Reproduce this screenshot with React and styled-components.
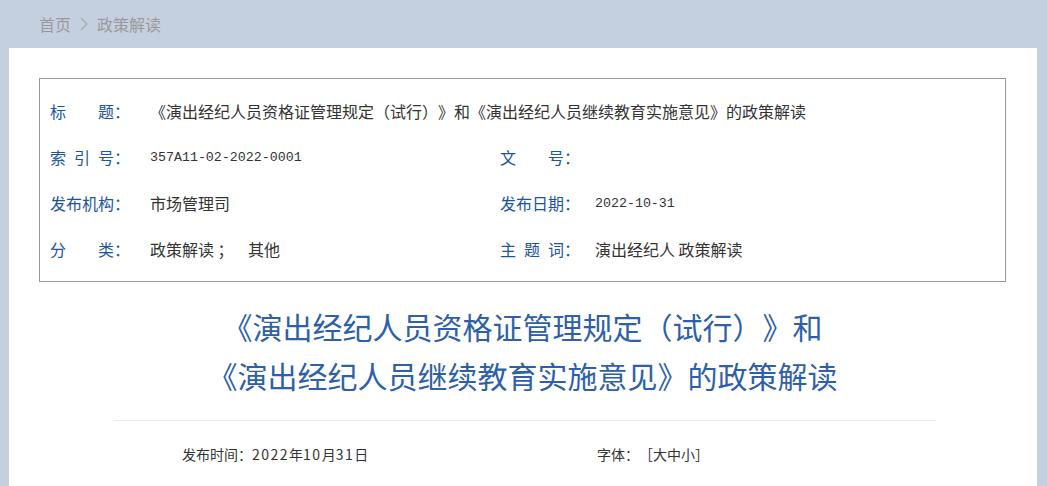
import styled, { createGlobalStyle } from 'styled-components'

const GlobalStyle = createGlobalStyle`
	html, body {
		margin: 0;
		padding: 0;
		background: #c4d0e0;
		font-family: "Noto Sans CJK SC", "Liberation Sans", sans-serif;
		text-spacing-trim: space-all;
	}
`

const Page = styled.div`
	width: 1047px;
	height: 486px;
	overflow: hidden;
	background: #c4d0e0;
`

const Crumbs = styled.div`
	height: 48px;
	padding-left: 39px;
	display: flex;
	align-items: center;
	gap: 9px;
	font-size: 16px;
	color: #9a9a9a;
	& svg {
		width: 8px;
		height: 14px;
	}
`

const Card = styled.div`
	margin: 0 10px 0 9px;
	background: #ffffff;
	padding: 30px 31px 0 30px;
`

const InfoBox = styled.div`
	border: 1px solid #999999;
	padding: 9px 0 9px 10px;
	display: grid;
	grid-template-columns: 100px 350px 95px 1fr;
	grid-auto-rows: 46px;
	font-size: 16px;
`

const Label = styled.div`
	display: flex;
	align-items: center;
	color: #1b55a0;
	& > span {
		display: inline-block;
		width: 64px;
		text-align: justify;
		text-align-last: justify;
	}
`

const Value = styled.div`
	display: flex;
	align-items: center;
	color: #333333;
	white-space: pre;
	grid-column: ${({ $wide }) => ($wide ? '2 / 5' : 'auto')};
	font-family: ${({ $mono }) =>
		$mono ? '"Liberation Mono", monospace' : 'inherit'};
	font-size: ${({ $mono }) => ($mono ? '13.3px' : '16px')};
`

const Title = styled.h1`
	margin: 20px 0 0;
	text-align: center;
	font-weight: normal;
	font-size: 30px;
	line-height: 49px;
	color: #2e5fa9;
`

const Divider = styled.hr`
	margin: 20px 70px 0 75px;
	border: none;
	border-top: 1px solid #ececec;
`

const Meta = styled.div`
	display: grid;
	grid-template-columns: 1fr 1fr;
	margin: 0 70px 0 75px;
	height: 66px;
	align-items: center;
	font-size: 14px;
	color: #333333;
`

const MetaItem = styled.div`
	padding-left: ${({ $pad }) => $pad}px;
	white-space: nowrap;
	& b {
		font-weight: normal;
		letter-spacing: 1.5px;
	}
`

function Field({ label, children, ...props }) {
	return (
		<>
			<Label>
				<span>{label}</span>：
			</Label>
			<Value {...props}>{children}</Value>
		</>
	)
}

export default function App() {
	return (
		<Page>
			<GlobalStyle />
			<Crumbs>
				<span>首页</span>
				<svg viewBox="0 0 8 14" fill="none" stroke="#aaaaaa" strokeWidth="1.3">
					<path d="M1 1l6 6-6 6" />
				</svg>
				<span>政策解读</span>
			</Crumbs>
			<Card>
				<InfoBox>
					<Field label="标题" $wide>
						《演出经纪人员资格证管理规定（试行）》和《演出经纪人员继续教育实施意见》的政策解读
					</Field>
					<Field label="索引号" $mono>357A11-02-2022-0001</Field>
					<Field label="文号"></Field>
					<Field label="发布机构">市场管理司</Field>
					<Field label="发布日期" $mono>2022-10-31</Field>
					<Field label="分类">{'政策解读 ；    其他'}</Field>
					<Field label="主题词">演出经纪人 政策解读</Field>
				</InfoBox>
				<Title>
					《演出经纪人员资格证管理规定（试行）》和
					<br />
					《演出经纪人员继续教育实施意见》的政策解读
				</Title>
				<Divider />
				<Meta>
					<MetaItem $pad={68}>发布时间：<b>2022</b>年<b>10</b>月<b>31</b>日</MetaItem>
					<MetaItem $pad={72}>字体：［大中小］</MetaItem>
				</Meta>
			</Card>
		</Page>
	)
}
